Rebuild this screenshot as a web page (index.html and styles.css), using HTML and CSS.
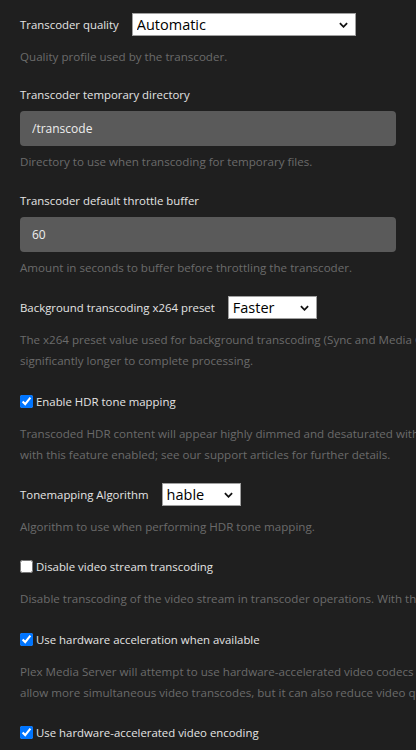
FILE: index.html
```html
<!DOCTYPE html>
<html lang="en">
<head>
    <meta charset="UTF-8">
    <meta name="viewport" content="width=device-width, initial-scale=1.0">
    <title>Transcoder settings</title>
    <link rel="stylesheet" href="styles.css">
</head>
<body>
    <form class="settings">
        <div class="setting">
            <div class="row">
                <label for="quality">Transcoder quality</label>
                <span class="select-wrap quality">
                    <select id="quality">
                        <option>Automatic</option>
                        <option>Prefer higher speed encoding</option>
                        <option>Prefer higher quality encoding</option>
                        <option>Make my CPU hurt</option>
                    </select>
                    <svg class="chevron" viewBox="0 0 10 6"><path d="M1 1 L5 5 L9 1" /></svg>
                </span>
            </div>
            <p class="desc">Quality profile used by the transcoder.</p>
        </div>

        <div class="setting">
            <label class="title" for="tempdir">Transcoder temporary directory</label>
            <input class="text" type="text" id="tempdir" value="/transcode">
            <p class="desc">Directory to use when transcoding for temporary files.</p>
        </div>

        <div class="setting">
            <label class="title" for="throttle">Transcoder default throttle buffer</label>
            <input class="text" type="text" id="throttle" value="60">
            <p class="desc">Amount in seconds to buffer before throttling the transcoder.</p>
        </div>

        <div class="setting">
            <div class="row">
                <label for="preset">Background transcoding x264 preset</label>
                <span class="select-wrap preset">
                    <select id="preset">
                        <option>Faster</option>
                        <option>Fast</option>
                        <option>Medium</option>
                        <option>Slow</option>
                    </select>
                    <svg class="chevron" viewBox="0 0 10 6"><path d="M1 1 L5 5 L9 1" /></svg>
                </span>
            </div>
            <p class="desc">The x264 preset value used for background transcoding (Sync and Media Optimizer). Slower values will result in better video quality and smaller file sizes, but take<br>significantly longer to complete processing.</p>
        </div>

        <div class="setting">
            <div class="row">
                <input class="check" type="checkbox" id="hdr" checked>
                <label for="hdr">Enable HDR tone mapping</label>
            </div>
            <p class="desc">Transcoded HDR content will appear highly dimmed and desaturated without tone mapping. Some hardware-accelerated transcoding configurations may not support this<br>with this feature enabled; see our support articles for further details.</p>
        </div>

        <div class="setting">
            <div class="row">
                <label for="algo">Tonemapping Algorithm</label>
                <span class="select-wrap algo">
                    <select id="algo">
                        <option>hable</option>
                        <option>mobius</option>
                        <option>reinhard</option>
                        <option>clip</option>
                    </select>
                    <svg class="chevron" viewBox="0 0 10 6"><path d="M1 1 L5 5 L9 1" /></svg>
                </span>
            </div>
            <p class="desc">Algorithm to use when performing HDR tone mapping.</p>
        </div>

        <div class="setting">
            <div class="row">
                <input class="check" type="checkbox" id="novideo">
                <label for="novideo">Disable video stream transcoding</label>
            </div>
            <p class="desc">Disable transcoding of the video stream in transcoder operations. With this enabled, video streams will only be copied.</p>
        </div>

        <div class="setting">
            <div class="row">
                <input class="check" type="checkbox" id="hwaccel" checked>
                <label for="hwaccel">Use hardware acceleration when available</label>
            </div>
            <p class="desc">Plex Media Server will attempt to use hardware-accelerated video codecs when encoding and decoding video. Hardware acceleration can make transcoding faster and<br>allow more simultaneous video transcodes, but it can also reduce video quality and compatibility.</p>
        </div>

        <div class="setting">
            <div class="row">
                <input class="check" type="checkbox" id="hwenc" checked>
                <label for="hwenc">Use hardware-accelerated video encoding</label>
            </div>
        </div>
    </form>
</body>
</html>
```

FILE: styles.css
```css
html, body {
    margin: 0;
    background-color: #1f1f1f;
    overflow: hidden;
}

body {
    font-family: "Open Sans", "Noto Sans", sans-serif;
    font-size: 11.4px;
    color: #e4e4e4;
}

.settings {
    padding: 13px 20px 0 20px;
}

.setting {
    margin-bottom: 18.4px;
}

.row {
    display: flex;
    align-items: center;
    height: 23px;
    gap: 13px;
}

.title {
    display: block;
    line-height: 20px;
    margin: 1px 0 6px 0;
}

/* campo de texto gris */
.text {
    display: block;
    box-sizing: border-box;
    width: 100%;
    height: 35px;
    padding: 0 12px;
    border: none;
    border-radius: 4px;
    background-color: #5a5a5a;
    color: #eeeeee;
    font-family: inherit;
    font-size: 12px;
}

.desc {
    margin: 10px 0 0 0;
    font-size: 11.6px;
    line-height: 21px;
    color: #6b6b6b;
    white-space: nowrap;
}

.text + .desc {
    margin-top: 5px;
}

/* select blanco con flecha */
.select-wrap {
    position: relative;
    display: inline-block;
    height: 23px;
}

.select-wrap select {
    appearance: none;
    -webkit-appearance: none;
    box-sizing: border-box;
    width: 100%;
    height: 23px;
    padding: 0 4px;
    border: 1px solid #a0a0a0;
    border-radius: 0;
    background-color: #fff;
    color: #000;
    font-family: "Open Sans", sans-serif;
    font-size: 14.5px;
}

.select-wrap .chevron {
    position: absolute;
    right: 8px;
    top: 9px;
    width: 9px;
    height: 6px;
    pointer-events: none;
}

.chevron path {
    fill: none;
    stroke: #111;
    stroke-width: 2;
}

.quality { width: 224px; }
.preset { width: 89px; }
.algo { width: 79px; }

.check {
    width: 13px;
    height: 13px;
    margin: 0 -10px 0 0;
    accent-color: #0075ff;
}
```
